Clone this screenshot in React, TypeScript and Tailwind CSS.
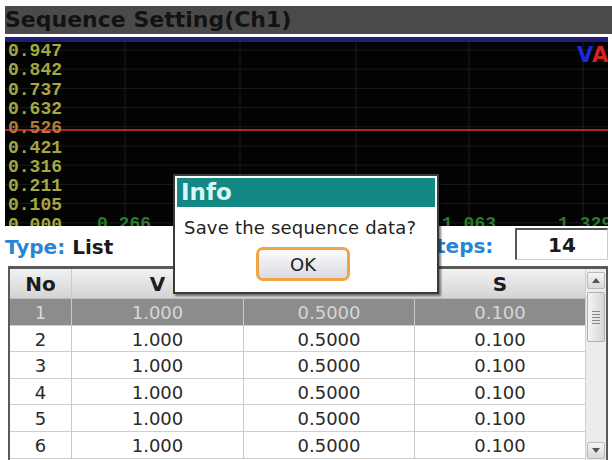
import React from 'react';

const yLabels = ['0.947', '0.842', '0.737', '0.632', '0.526', '0.421', '0.316', '0.211', '0.105', '0.000'];
const rows = [1, 2, 3, 4, 5, 6];

function Chart() {
  // local coords: chart box spans x 5..608, y 37..226
  return (
    <svg width="603" height="189" viewBox="0 0 603 189" className="block">
      <rect x="0" y="0" width="603" height="189" fill="#030303" />
      <rect x="0" y="0" width="603" height="5" fill="#1e1e74" />
      {yLabels.map((_, i) => (
        <line key={i} x1="0" x2="603" y1={13 + i * 19.2} y2={13 + i * 19.2} stroke="#1b1b1b" strokeWidth="1" />
      ))}
      {[120, 235, 351, 464, 578].map((x) => (
        <line key={x} x1={x} x2={x} y1="5" y2="189" stroke="#1d1d1d" strokeWidth="1" />
      ))}
      <line x1="0" x2="603" y1="93" y2="93" stroke="#b42424" strokeWidth="2" />
      {yLabels.map((t, i) => (
        <text
          key={t}
          x="3"
          y={19 + i * 19.3}
          fontFamily="'Liberation Mono', monospace"
          fontWeight="bold"
          fontSize="18"
          fill={t === '0.526' ? '#b07a3a' : '#a6a642'}
        >
          {t}
        </text>
      ))}
      <text x="92" y="192" fontFamily="'Liberation Mono', monospace" fontWeight="bold" fontSize="18" fill="#2a7a2a">0.266</text>
      <text x="437" y="192" fontFamily="'Liberation Mono', monospace" fontWeight="bold" fontSize="18" fill="#2a7a2a">1.063</text>
      <text x="553" y="192" fontFamily="'Liberation Mono', monospace" fontWeight="bold" fontSize="18" fill="#2a7a2a">1.329</text>
      <text x="572" y="25" fontFamily="'DejaVu Sans', sans-serif" fontWeight="bold" fontSize="21" fill="#1a2ad8">V</text>
      <text x="587" y="25" fontFamily="'DejaVu Sans', sans-serif" fontWeight="bold" fontSize="21" fill="#d82222">A</text>
    </svg>
  );
}

function Arrow({ up }: { up?: boolean }) {
  return (
    <div className="h-[17px] w-[18px] mx-auto border border-[#b8b8b8] rounded-[2px] bg-gradient-to-b from-[#f6f6f6] to-[#d8d8d8] flex items-center justify-center">
      <svg width="8" height="5" viewBox="0 0 8 5">
        <path d={up ? 'M0 5 L4 0 L8 5 Z' : 'M0 0 L4 5 L8 0 Z'} fill="#555" />
      </svg>
    </div>
  );
}

export default function App() {
  const cell = 'flex items-center justify-center border-r border-[#c9c9c9]';
  return (
    <div
      className="relative w-[612px] h-[460px] overflow-hidden bg-white"
      style={{ fontFamily: "'DejaVu Sans', Verdana, sans-serif" }}
    >
      <div className="h-[6px] bg-white" />
      <div className="ml-[5px] h-[28px] bg-[#4a4a4a] flex items-center overflow-hidden">
        <span className="text-[22px] font-bold leading-none text-[#121212]">Sequence Setting(Ch1)</span>
      </div>
      <div className="h-[3px]" />
      <div className="ml-[5px]">
        <Chart />
      </div>

      {/* type / steps row */}
      <div className="h-[40px] flex items-center relative">
        <div className="ml-[5px] text-[20px] font-bold leading-none mt-[2px]">
          <span className="text-[#2a84d6]">Type:</span> <span className="text-[#1a1a1a]">List</span>
        </div>
        <div className="absolute left-[436px] top-[10px] text-[20px] font-bold leading-none text-[#2a84d6]">teps:</div>
        <div className="absolute left-[515px] top-[2px] w-[93px] h-[32px] bg-white border-l-2 border-t-2 border-[#555] border-r border-b border-r-[#ccc] border-b-[#ccc] flex items-center justify-center text-[20px] font-bold text-[#1a1a1a]">
          14
        </div>
      </div>

      {/* table */}
      <div className="ml-[8px] w-[600px] h-[200px] border-t-[3px] border-l-2 border-r-2 border-[#5a5a5a] flex">
        <div className="flex-1 flex flex-col">
          <div className="h-[30px] grid grid-cols-[62px_172px_171px_170px] bg-gradient-to-b from-[#f2f2f2] to-[#d4d4d4] border-b border-[#bdbdbd] text-[20px] font-bold text-[#1c1c1c]">
            <div className={cell}>No</div>
            <div className={cell}>V</div>
            <div className={cell}>I</div>
            <div className="flex items-center justify-center">S</div>
          </div>
          {rows.map((n) => {
            const sel = n === 1;
            return (
              <div
                key={n}
                className={`h-[26.6px] grid grid-cols-[62px_172px_171px_170px] border-b border-[#cfcfcf] text-[18px] ${
                  sel ? 'bg-[#8c8c8c] text-[#d6d6d6]' : 'bg-white text-[#2a2a2a]'
                }`}
              >
                <div className={cell}>{n}</div>
                <div className={cell}>1.000</div>
                <div className={cell}>0.5000</div>
                <div className="flex items-center justify-center">0.100</div>
              </div>
            );
          })}
        </div>
        <div className="w-[22px] bg-[#ececec] border-l border-[#cfcfcf] flex flex-col pt-[3px]">
          <Arrow up />
          <div className="h-[50px] w-[18px] mx-auto mt-[3px] border border-[#b0b0b0] rounded-[2px] bg-gradient-to-r from-[#f4f4f4] to-[#d6d6d6] flex flex-col items-center justify-center gap-[2px]">
            {[0, 1, 2, 3, 4].map((i) => (
              <div key={i} className="w-[8px] h-[1px] bg-[#8a8a8a]" />
            ))}
          </div>
          <div className="flex-1" />
          <div className="mb-[7px]">
            <Arrow />
          </div>
        </div>
      </div>

      {/* Info dialog */}
      <div className="absolute left-[173px] top-[174px] w-[266px] h-[120px] bg-white border-2 border-[#3a3a3a] shadow-[2px_2px_2px_rgba(0,0,0,0.5)] p-[2px] flex flex-col">
        <div className="h-[29px] bg-[#138884] flex items-center pl-[4px]">
          <span className="text-[23px] font-bold text-[#d8f6f4] leading-none">Info</span>
        </div>
        <div className="pl-[7px] pt-[12px] text-[18px] leading-none text-[#222] tracking-[0.2px]">Save the sequence data?</div>
        <div className="flex justify-center mt-[10px] pr-[6px]">
          <div className="w-[94px] h-[34px] rounded-[7px] border-[3px] border-[#f0a544] bg-gradient-to-b from-[#fbfbfb] to-[#d9dbe2] flex items-center justify-center text-[18px] text-[#222]">
            OK
          </div>
        </div>
      </div>
    </div>
  );
}
